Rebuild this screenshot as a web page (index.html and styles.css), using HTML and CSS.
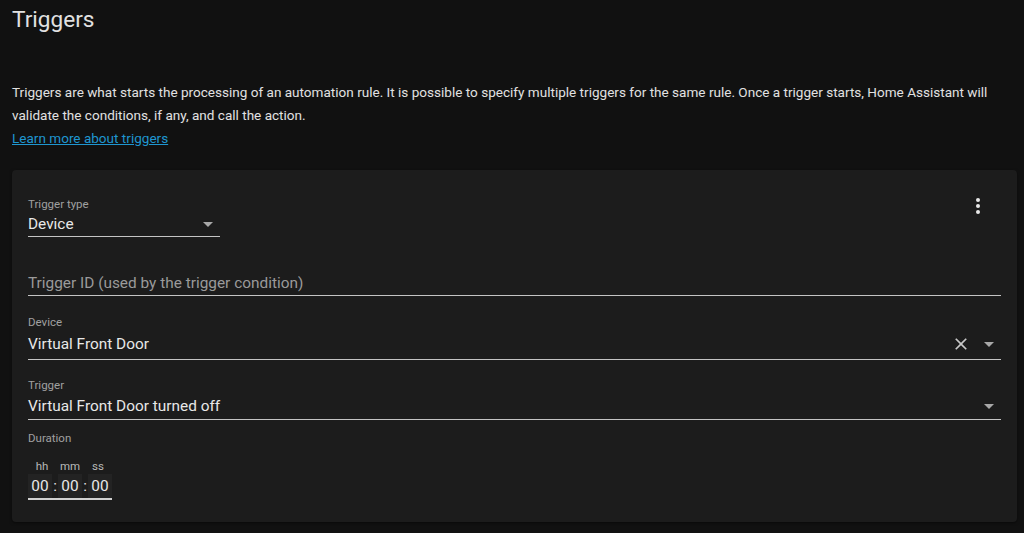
FILE: index.html
```html
<!DOCTYPE html>
<html>
<head>
<meta charset="utf-8">
<link rel="stylesheet" href="styles.css">
</head>
<body>
<h1 class="title">Triggers</h1>
<p class="desc">Triggers are what starts the processing of an automation rule. It is possible to specify multiple triggers for the same rule. Once a trigger starts, Home Assistant will validate the conditions, if any, and call the action.<br><a class="link" href="#">Learn more about triggers</a></p>
<div class="card">
  <div class="row-top">
    <div class="field select small">
      <div class="label">Trigger type</div>
      <div class="value"><span>Device</span><span class="arrow"></span></div>
    </div>
    <div class="menu"><span></span><span></span><span></span></div>
  </div>
  <div class="field plain">
    <div class="value placeholder"><span>Trigger ID (used by the trigger condition)</span></div>
  </div>
  <div class="field select gap1">
    <div class="label">Device</div>
    <div class="value"><span>Virtual Front Door</span>
      <span class="icons">
        <svg class="clear" width="20" height="20" viewBox="0 0 24 24"><path d="M19,6.41L17.59,5L12,10.59L6.41,5L5,6.41L10.59,12L5,17.59L6.41,19L12,13.41L17.59,19L19,17.59L13.41,12L19,6.41Z" fill="#c8c8c8"/></svg>
        <span class="arrow"></span>
      </span>
    </div>
  </div>
  <div class="field select gap2">
    <div class="label">Trigger</div>
    <div class="value"><span>Virtual Front Door turned off</span><span class="arrow"></span></div>
  </div>
  <div class="duration">
    <div class="label">Duration</div>
    <div class="time">
      <div class="units"><span>hh</span><span>mm</span><span>ss</span></div>
      <div class="digits"><span class="cell">00</span><span class="colon">:</span><span class="cell">00</span><span class="colon">:</span><span class="cell">00</span></div>
    </div>
  </div>
</div>
</body>
</html>
```
FILE: styles.css
```css
html, body {
  margin: 0;
  padding: 0;
  background: #111111;
  font-family: Roboto, "Liberation Sans", sans-serif;
  color: #e1e1e1;
}
.title {
  margin: 4px 0 0 12px;
  font-size: 22.6px;
  line-height: 32px;
  font-weight: 400;
  color: #e1e1e1;
}
.desc {
  margin: 45px 24px 0 12px;
  font-size: 13.55px;
  line-height: 23px;
  color: #e1e1e1;
}
.link {
  color: #1f96d0;
  text-decoration: underline;
}
.card {
  margin: 20px 7px 11px 12px;
  background: #1c1c1c;
  border-radius: 4px;
  padding: 26px 16px 22px 16px;
  box-shadow: 0 1px 3px rgba(0,0,0,0.5);
}
.row-top {
  display: flex;
  justify-content: space-between;
  align-items: flex-start;
}
.field {
  border-bottom: 1px solid #c4c4c4;
}
.field.small {
  width: 192px;
}
.label {
  font-size: 11.5px;
  line-height: 16px;
  color: #a0a0a0;
}
.value {
  display: flex;
  justify-content: space-between;
  align-items: center;
  font-size: 15.4px;
  line-height: 24px;
  height: 24px;
  color: #e8e8e8;
}
.field.plain {
  margin-top: 34px;
}
.placeholder {
  color: #9a9a9a;
}
.gap1 {
  margin-top: 18px;
}
.gap1 .value {
  margin-top: 2px;
  padding-bottom: 3px;
}
.gap2 {
  margin-top: 17px;
}
.gap2 .value {
  margin-top: 1px;
  padding-bottom: 1px;
}
.arrow {
  width: 0;
  height: 0;
  border-left: 5px solid transparent;
  border-right: 5px solid transparent;
  border-top: 5px solid #a8a8a8;
  margin-right: 7px;
}
.icons {
  display: flex;
  align-items: center;
  gap: 13px;
}
.clear {
  display: block;
}
.menu {
  display: flex;
  flex-direction: column;
  gap: 2px;
  margin-top: 2px;
  margin-right: 21px;
}
.menu span {
  width: 4px;
  height: 4px;
  background: #e8e8e8;
  border-radius: 50%;
}
.duration {
  margin-top: 10px;
}
.time {
  margin-top: 12px;
  width: 84px;
  border-bottom: 2px solid #d0d0d0;
}
.units {
  display: flex;
  font-size: 11.5px;
  line-height: 16px;
  color: #b8b8b8;
}
.units span {
  width: 28px;
  text-align: center;
}
.digits {
  display: flex;
  font-size: 15.4px;
  line-height: 24px;
  color: #e8e8e8;
}
.cell {
  width: 24px;
  text-align: center;
  background: #232323;
}
.colon {
  width: 6px;
  text-align: center;
}
```
